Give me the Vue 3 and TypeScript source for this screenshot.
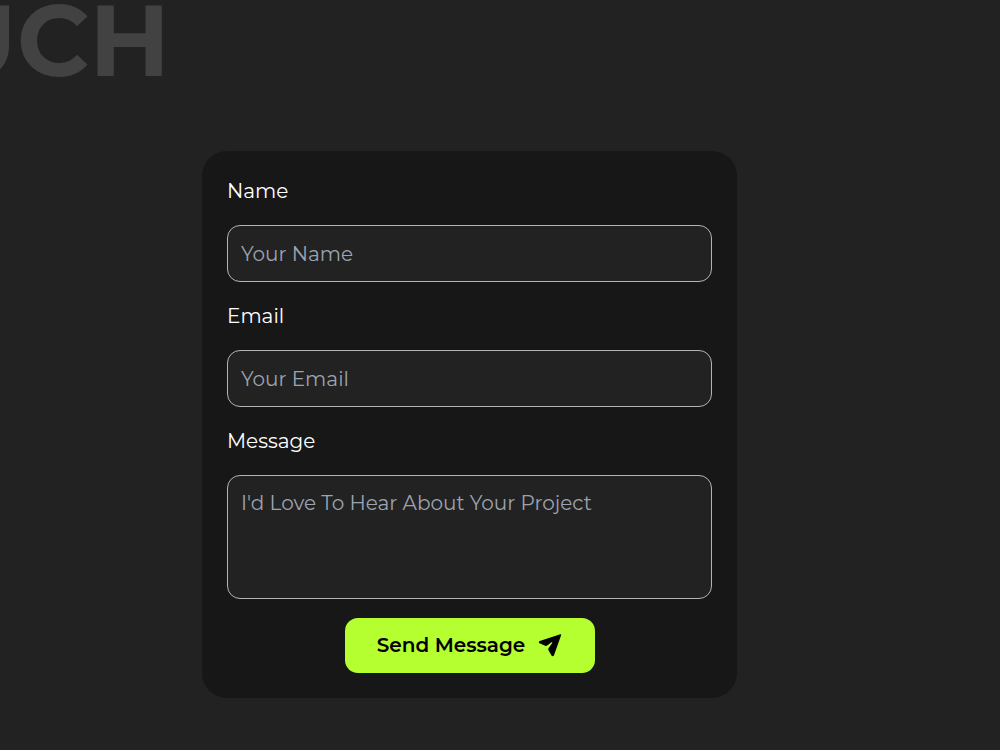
<script setup lang="ts">
import { reactive } from 'vue'

const form = reactive({ name: '', email: '', message: '' })

function send(): void {
  form.name = ''
  form.email = ''
  form.message = ''
}
</script>

<template>
  <main class="contact">
    <div class="banner">
      <h1 class="banner-title">UCH</h1>
    </div>
    <div class="content">
      <form class="card" @submit.prevent="send">
        <label class="label" for="name">Name</label>
        <input id="name" v-model="form.name" class="field" type="text" placeholder="Your Name" />
        <label class="label" for="email">Email</label>
        <input id="email" v-model="form.email" class="field" type="email" placeholder="Your Email" />
        <label class="label" for="message">Message</label>
        <textarea
          id="message"
          v-model="form.message"
          class="field message"
          placeholder="I'd Love To Hear About Your Project"
        ></textarea>
        <button class="send" type="submit">
          <span>Send Message</span>
          <svg class="send-icon" viewBox="0 0 24 24" aria-hidden="true">
            <path
              d="M22.300 1.200c.6-.2 1.100.3.900.900L16 22.300c-.4 1.100-1.900 1.200-2.500.2l-2.900-4.900c-.5-.9-.5-1.700.1-2.500l3.500-5c.4-.7-.1-1.200-.8-.8l-4.200 3.200c-.9.600-1.700.6-2.500.1L1.500 10.200c-1-.6-.8-1.800.3-2.200z"
            />
          </svg>
        </button>
      </form>
    </div>
  </main>
</template>

<style>
body {
  margin: 0;
  background: #222222;
}
</style>

<style scoped>
.contact {
  box-sizing: border-box;
  min-height: 100vh;
  padding-bottom: 52px;
  overflow: hidden;
  background: #222222;
  color: #ffffff;
  font-family: Montserrat, "Liberation Sans", sans-serif;
  font-size: 20px;
  line-height: 30px;
}

.banner {
  display: flex;
  justify-content: flex-end;
  width: 170px;
  height: 151px;
}

.banner-title {
  margin: 0;
  color: #424242;
  font-size: 100px;
  font-weight: 700;
  line-height: 80px;
}

.content {
  padding: 0 26.3% 0 20.2%;
}

.card {
  display: flex;
  flex-direction: column;
  gap: 19px;
  padding: 25px;
  border-radius: 25px;
  background: #171717;
}

.label {
  align-self: flex-start;
}

.field {
  box-sizing: border-box;
  width: 100%;
  height: 57px;
  margin: 0;
  padding: 12px 13px;
  border: 1px solid #b4b4b4;
  border-radius: 13px;
  outline: none;
  background: #222222;
  color: #ffffff;
  font: inherit;
}

.field::placeholder {
  color: #9ca3af;
  opacity: 1;
}

.message {
  height: 124px;
  resize: none;
}

.send {
  display: flex;
  align-items: center;
  align-self: center;
  justify-content: center;
  gap: 13px;
  width: 250px;
  height: 55px;
  padding: 0 0 1px;
  border: 0;
  border-radius: 13px;
  background: #b5ff30;
  color: #000000;
  font: inherit;
  font-weight: 600;
  cursor: pointer;
}

.send-icon {
  width: 24px;
  height: 24px;
  fill: currentColor;
}
</style>
